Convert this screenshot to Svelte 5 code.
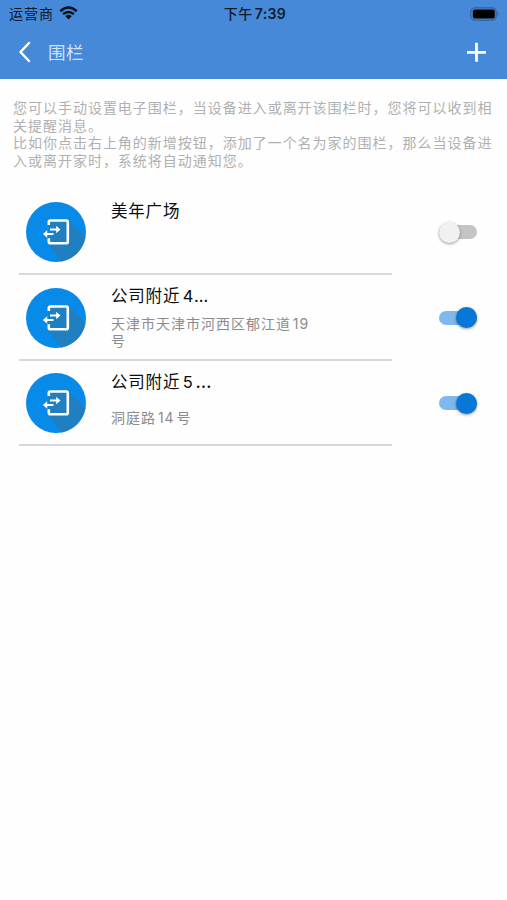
<script lang="ts">
  let fences = $state([
    { name: '美年广场', dots: '', address: '', enabled: false },
    { name: '公司附近 4', dots: '...', address: '天津市天津市河西区郁江道 19 号', enabled: true },
    { name: '公司附近 5', dots: '…', address: '洞庭路 14 号', enabled: true }
  ]);
</script>

<div class="page">
  <header>
    <div class="status-bar">
      <div class="carrier">
        <span>运营商</span>
        <svg width="19" height="14" viewBox="0 0 19 14">
          <path d="M1.3 5.2 Q9.5 -2.1 17.7 5.2" fill="none" stroke="#07101b" stroke-width="2.5" />
          <path d="M4.1 8.2 Q9.5 3.6 14.9 8.2" fill="none" stroke="#07101b" stroke-width="2.4" />
          <path d="M6.3 10.2 Q9.5 7.4 12.7 10.2 L9.5 13.4 Z" fill="#07101b" />
        </svg>
      </div>
      <div class="time">下午 <b>7:39</b></div>
      <svg class="battery" width="31" height="14" viewBox="0 0 31 14">
        <rect x="0.8" y="0.8" width="25.4" height="12.4" rx="4" fill="none" stroke="#326297" stroke-width="1.2" />
        <rect x="2.8" y="2.6" width="22" height="9" rx="2" fill="#000" />
        <path d="M27.6 5 Q30 7 27.6 9 Z" fill="#326297" />
      </svg>
    </div>
    <div class="nav-bar">
      <button class="back" aria-label="返回">
        <svg width="14" height="22" viewBox="0 0 14 22">
          <path d="M11 2 L2.5 11 L11 20" fill="none" stroke="#fff" stroke-width="2.5" stroke-linecap="round" stroke-linejoin="round" />
        </svg>
      </button>
      <h1>围栏</h1>
      <button class="add" aria-label="新增">
        <svg width="20" height="20" viewBox="0 0 20 20">
          <path d="M10.5 0.8 V19.8 M1 10.3 H20" stroke="#fff" stroke-width="2.8" />
        </svg>
      </button>
    </div>
  </header>

  <div class="notice">
    <p>您可以手动设置电子围栏，当设备进入或离开该围栏时，您将可以收到相关提醒消息。</p>
    <p>比如你点击右上角的新增按钮，添加了一个名为家的围栏，那么当设备进入或离开家时，系统将自动通知您。</p>
  </div>

  <ul>
    {#each fences as fence}
      <li>
        <div class="info">
          <svg class="icon" width="60" height="60" viewBox="0 0 60 60">
            <circle cx="30" cy="30" r="30" fill="#078ae8" />
            <path d="M42.5 18 L59.4 35.3 A30 30 0 0 1 35.5 59.4 L22 42 Z" fill="#1f7fc0" />
            <rect x="22.5" y="18.5" width="19.4" height="23" fill="#1f7fc0" />
            <path d="M22.8 23 V20 Q22.8 18.5 24.3 18.5 H40.3 Q41.8 18.5 41.8 20 V39.8 Q41.8 41.3 40.3 41.3 H24.3 Q22.8 41.3 22.8 39.8 V36.3" fill="none" stroke="#fff" stroke-width="2.6" />
            <path d="M24 27.5 H31 M20 32 H27.5" stroke="#fff" stroke-width="2.2" />
            <path d="M30.2 23.8 L34.5 27.5 L30.2 31.2 Z M21.2 28.3 L16.9 32 L21.2 35.7 Z" fill="#fff" />
          </svg>
          <div class="text">
            <h2>{fence.name}<span class="dots" class:wide={fence.dots === '…'}>{fence.dots}</span></h2>
            <div class="address">{fence.address}</div>
          </div>
        </div>
        <button
          class="switch"
          class:on={fence.enabled}
          role="switch"
          aria-checked={fence.enabled}
          aria-label={fence.name}
          onclick={() => (fence.enabled = !fence.enabled)}
        >
          <span class="knob"></span>
        </button>
      </li>
    {/each}
  </ul>
</div>

<style>
  :global(body) {
    background: #fff;
  }

  .page {
    min-height: 900px;
    background: #fefefe;
    font-family: Inter, "Noto Sans CJK SC", sans-serif;
  }

  button {
    display: block;
    padding: 0;
    border: none;
    background: none;
    cursor: pointer;
  }

  svg {
    display: block;
  }

  header {
    height: 79px;
    background: #4689d8;
  }

  .status-bar {
    display: grid;
    grid-template-columns: 1fr auto 1fr;
    align-items: center;
    box-sizing: border-box;
    height: 27px;
    padding: 0 6px 0 9px;
    font-size: 14px;
    line-height: 20px;
    color: #0c1b2c;
  }

  .carrier {
    display: flex;
    gap: 5px;
    letter-spacing: 1px;
  }

  .carrier svg {
    margin-top: 2px;
  }

  .time {
    font-weight: 500;
    letter-spacing: 0.4px;
    word-spacing: -2px;
  }

  .time b {
    font-weight: 600;
  }

  .battery {
    justify-self: end;
  }

  .nav-bar {
    display: flex;
    align-items: center;
    height: 50px;
    padding: 0 21px 0 18px;
  }

  h1 {
    flex: 1;
    margin: 1px 0 0 16px;
    font-size: 17.5px;
    font-weight: 400;
    line-height: 24px;
    letter-spacing: 0.5px;
    color: #d5e2f3;
  }

  .notice {
    padding: 20px 13px 0;
    font-size: 14px;
    line-height: 17.5px;
    letter-spacing: 0.98px;
    color: #b0b0b0;
  }

  .notice p {
    margin: 0;
    width: 484px;
  }

  ul {
    margin: 0;
    padding: 20.5px 0 0;
    list-style: none;
  }

  li {
    display: flex;
    align-items: center;
    height: 85.6px;
  }

  .info {
    display: flex;
    align-items: center;
    box-sizing: border-box;
    width: 373px;
    height: 100%;
    margin-left: 19px;
    padding: 2px 0 0 7px;
    border-bottom: 2px solid #d8d8d8;
  }

  .text {
    display: flex;
    flex-direction: column;
    width: 215px;
    height: 72px;
    margin: 7px 0 0 25px;
  }

  h2 {
    margin: 0;
    font-size: 16.5px;
    font-weight: 400;
    line-height: 22px;
    letter-spacing: 0.8px;
    word-spacing: -3px;
    color: #0c0c0c;
  }

  .dots {
    letter-spacing: 0;
  }

  .dots.wide {
    margin-left: 2px;
    font-size: 18.5px;
    line-height: 1;
  }

  .address {
    display: flex;
    align-items: center;
    flex: 1;
    width: 204px;
    font-size: 14px;
    line-height: 17px;
    letter-spacing: 0.99px;
    word-spacing: -3px;
    color: #8c8c8c;
  }

  .switch {
    display: flex;
    align-items: center;
    width: 38px;
    height: 14px;
    margin-left: 47px;
    border-radius: 7px;
    background: #c4c4c4;
  }

  .knob {
    flex: none;
    width: 21px;
    height: 21px;
    border-radius: 50%;
    background: #f1f1f1;
    box-shadow: 0 1px 3px rgba(0, 0, 0, 0.4);
  }

  .switch.on {
    justify-content: flex-end;
    background: #7fb8ec;
  }

  .switch.on .knob {
    background: #0878d8;
  }
</style>
